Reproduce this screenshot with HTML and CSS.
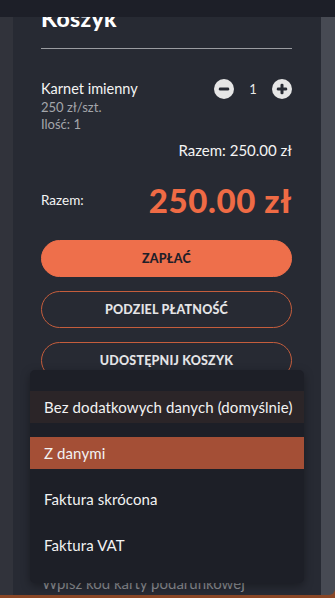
FILE: index.html
```html
<!DOCTYPE html>
<html lang="pl">
<head>
<meta charset="utf-8">
<title>Koszyk</title>
<link rel="stylesheet" href="styles.css">
</head>
<body>
<div class="topbar"></div>
<div class="shell">
  <div class="strip-left"></div>
  <main class="card">
    <h1 class="title">Koszyk</h1>
    <div class="item">
      <div class="item-info">
        <div class="item-name">Karnet imienny</div>
        <div class="item-sub">250 zł/szt.</div>
        <div class="item-sub">Ilość: 1</div>
      </div>
      <div class="qty">
        <span class="qty-btn">
          <svg viewBox="0 0 20 20" width="20" height="20"><circle cx="10" cy="10" r="10" fill="#e6e6e6"/><rect x="4.8" y="8.5" width="10.4" height="3" rx="1.3" fill="#272a33"/></svg>
        </span>
        <span class="qty-val">1</span>
        <span class="qty-btn">
          <svg viewBox="0 0 20 20" width="20" height="20"><circle cx="10" cy="10" r="10" fill="#e6e6e6"/><rect x="4.8" y="8.5" width="10.4" height="3" rx="1.3" fill="#272a33"/><rect x="8.5" y="4.8" width="3" height="10.4" rx="1.3" fill="#272a33"/></svg>
        </span>
      </div>
    </div>
    <div class="subtotal">Razem: 250.00 zł</div>
    <div class="total">
      <span class="total-label">Razem:</span>
      <span class="total-value">250.00 zł</span>
    </div>
    <div class="actions">
      <button class="btn btn-primary">ZAPŁAĆ</button>
      <button class="btn btn-outline">PODZIEL PŁATNOŚĆ</button>
      <button class="btn btn-outline">UDOSTĘPNIJ KOSZYK</button>
    </div>
    <div class="gift">
      <div class="gift-input">Wpisz kod karty podarunkowej</div>
    </div>
    <ul class="menu">
      <li class="menu-item hover">Bez dodatkowych danych (domyślnie)</li>
      <li class="menu-item selected">Z danymi</li>
      <li class="menu-item">Faktura skrócona</li>
      <li class="menu-item">Faktura VAT</li>
    </ul>
  </main>
  <div class="strip-right"></div>
</div>
<div class="bottom-line"></div>
</body>
</html>
```

FILE: styles.css
```css
* { box-sizing: border-box; }
html, body {
  margin: 0;
  padding: 0;
  width: 335px;
  height: 598px;
  overflow: hidden;
  background: #8a4726;
  font-family: "Lato", "Liberation Sans", sans-serif;
  color: #f2f2f2;
}
.topbar {
  position: absolute;
  top: 0;
  left: 0;
  right: 0;
  height: 17px;
  background: #1d1f28;
  z-index: 5;
}
.shell {
  display: grid;
  grid-template-columns: 13px 1fr 14px;
  height: 595px;
  border-bottom-right-radius: 6px;
  overflow: hidden;
}
.strip-left { background: #31333b; }
.strip-right { background: #474a53; }
.card {
  position: relative;
  background: #272a33;
  padding: 4px 29px 0 28px;
  overflow: hidden;
}
.title {
  margin: 0;
  font-size: 23px;
  line-height: 28px;
  font-weight: 900;
  letter-spacing: 0.3px;
  color: #ffffff;
  padding-bottom: 16px;
  border-bottom: 1px solid #9a9ca1;
}
.item {
  display: flex;
  justify-content: space-between;
  align-items: flex-start;
  margin-top: 30px;
}
.item-name {
  font-size: 14.5px;
  line-height: 20px;
  color: #f4f4f4;
}
.item-sub {
  font-size: 13px;
  line-height: 17px;
  color: #a4a6ab;
}
.qty {
  display: flex;
  align-items: center;
  height: 20px;
}
.qty-btn { display: flex; width: 20px; height: 20px; }
.qty-val {
  width: 38px;
  text-align: center;
  font-size: 13px;
  color: #e8e8e8;
}
.subtotal {
  margin-top: 7px;
  text-align: right;
  font-size: 15px;
  line-height: 20px;
  color: #f4f4f4;
}
.total {
  margin-top: 20px;
  display: flex;
  justify-content: space-between;
  align-items: center;
  height: 40px;
}
.total-label { font-size: 13.5px; color: #f4f4f4; }
.total-value {
  font-size: 33px;
  font-weight: 900;
  color: #ef6b45;
  letter-spacing: 0.6px;
}
.actions {
  margin-top: 20px;
  display: flex;
  flex-direction: column;
  gap: 14px;
}
.btn {
  height: 37px;
  border-radius: 19px;
  font-family: inherit;
  font-size: 12.5px;
  font-weight: 900;
  letter-spacing: 0.2px;
  cursor: pointer;
}
.btn-primary {
  background: #ee6f4b;
  border: 1px solid #ee6f4b;
  color: #1f2029;
}
.btn-outline {
  background: transparent;
  border: 1px solid #c45d3c;
  color: #e4e4e6;
}
.gift { margin-top: 194px; }
.gift-input {
  padding-left: 1px;
  font-size: 15px;
  line-height: 20px;
  color: #8e9096;
}
.menu {
  position: absolute;
  left: 17px;
  top: 370px;
  width: 274px;
  margin: 0;
  padding: 21px 0 22px;
  list-style: none;
  background: #1d1f27;
  border-radius: 5px;
  box-shadow: 0 3px 10px rgba(0, 0, 0, 0.35);
  display: flex;
  flex-direction: column;
  gap: 14px;
  z-index: 2;
}
.menu-item {
  height: 32px;
  line-height: 32px;
  padding-left: 14px;
  font-size: 15px;
  letter-spacing: 0.1px;
  color: #f2f2f2;
  white-space: nowrap;
}
.menu-item.hover { background: #2b2528; }
.menu-item.selected { background: #a44f36; }
.bottom-line { height: 3px; }
```
